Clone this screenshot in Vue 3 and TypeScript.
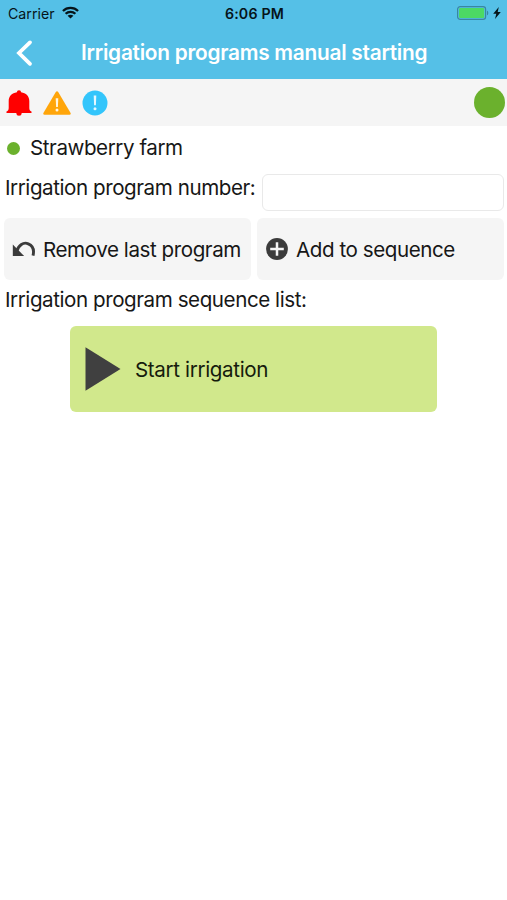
<script setup lang="ts">
import { ref } from 'vue'

const farmName = 'Strawberry farm'
const programNumber = ref('')
const sequence = ref<string[]>([])

function addToSequence(): void {
  const value = programNumber.value.trim()
  if (value) {
    sequence.value.push(value)
    programNumber.value = ''
  }
}

function removeLast(): void {
  sequence.value.pop()
}
</script>

<template>
  <div class="screen">
    <header class="header">
      <div class="status-bar">
        <div class="carrier">
          <span class="carrier-name">Carrier</span>
          <svg class="wifi" viewBox="0 0 18 13">
            <path d="M1 4.9C5.4 .6 12.6 .6 17 4.9M3.8 7.8C6.7 5.1 11.3 5.1 14.2 7.8" fill="none" stroke="#06141a" stroke-width="2.4" />
            <path d="M9 12.8 5.9 9.9C7.6 8.4 10.4 8.4 12.1 9.9Z" fill="#06141a" />
          </svg>
        </div>
        <span class="clock">6:06 PM</span>
        <div class="power">
          <svg class="battery" viewBox="0 0 32 14">
            <rect x="0.6" y="0.6" width="28" height="12.8" rx="2.6" fill="none" stroke="#3a86a0" stroke-width="1.2" />
            <rect x="2" y="2" width="25.2" height="10" rx="1.2" fill="#4cd964" />
            <path d="M30 4.7c1.7 .5 1.7 4.1 0 4.6Z" fill="#3a86a0" />
          </svg>
          <svg class="bolt" viewBox="0 0 8 12">
            <path d="M5.8 0 .2 6.7H3.3L2 12 7.8 5.1H4.7Z" fill="#06141a" />
          </svg>
        </div>
      </div>
      <div class="nav-bar">
        <svg class="back" viewBox="0 0 18 28">
          <path d="M15 3.4 4 14 15 24.8" fill="none" stroke="#fff" stroke-width="3.8" stroke-linecap="round" stroke-linejoin="miter" />
        </svg>
        <h1 class="title">Irrigation programs manual starting</h1>
      </div>
    </header>

    <div class="alerts">
      <div class="alert-icons">
        <svg class="bell" viewBox="0 0 26 26">
          <path d="M10.9 2.2a2.1 1.9 0 0 1 4.2 0c4.9 .7 8.2 3.9 8.2 8.7v7c0 1.8 .7 3 2.2 3.7v1.5H.5v-1.5c1.5-.7 2.2-1.9 2.2-3.7v-7c0-4.8 3.3-8 8.2-8.7Z" fill="#f00" />
          <path d="M10.4 23h5.2v.7a2.6 2 0 0 1-5.2 0Z" fill="#f00" />
        </svg>
        <svg class="warning" viewBox="0 0 28 24">
          <path d="M12.8 1.1Q14 -.7 15.2 1.1L27.6 22Q28.2 23.7 26.4 23.7H1.6Q-.2 23.7 .4 22Z" fill="#ffa50a" />
          <path d="M12.7 7.3h2.6l-.4 8.7h-1.8Z" fill="#fff5e0" />
          <circle cx="14" cy="19" r="1.5" fill="#fff5e0" />
        </svg>
        <svg class="info" viewBox="0 0 26 26">
          <circle cx="13" cy="13" r="12.5" fill="#33c5fb" />
          <path d="M11.7 5.5h2.6l-.4 9.8h-1.8Z" fill="#e5f8ff" />
          <circle cx="13" cy="18.7" r="1.5" fill="#e5f8ff" />
        </svg>
      </div>
      <span class="connection"></span>
    </div>

    <main class="content">
      <div class="farm">
        <span class="farm-dot"></span>
        <span class="farm-name">{{ farmName }}</span>
      </div>

      <div class="field">
        <label class="field-label" for="program">Irrigation program number:</label>
        <input id="program" v-model="programNumber" class="field-input" type="text" />
      </div>

      <div class="actions">
        <button class="action" type="button" @click="removeLast">
          <svg class="undo" viewBox="0 0 24 18">
            <path d="M4.6 11.5C6.5 5 11.5 1.7 16.3 3.8c4.2 1.8 6.1 6.2 4.7 11.8" fill="none" stroke="#3b3b3b" stroke-width="2.9" />
            <path d="M.8 4.4V15.9H12.1Z" fill="#3b3b3b" />
          </svg>
          <span class="remove-text">Remove last program</span>
        </button>
        <button class="action add" type="button" @click="addToSequence">
          <svg class="plus" viewBox="0 0 22 22">
            <circle cx="11" cy="11" r="10.9" fill="#3b3b3b" />
            <path d="M11 4.2V17.8M4.2 11H17.8" stroke="#f5f5f5" stroke-width="2.5" />
          </svg>
          <span class="add-text">Add to sequence</span>
        </button>
      </div>

      <div class="sequence">
        <span class="sequence-label">Irrigation program sequence list:</span>
        <span v-for="(item, index) in sequence" :key="index"> {{ item }}</span>
      </div>

      <button class="start" type="button">
        <svg class="play" viewBox="0 0 36 44">
          <path d="M.5 .3V43.7L35.5 22Z" fill="#404040" />
        </svg>
        <span class="start-text">Start irrigation</span>
      </button>
    </main>
  </div>
</template>

<style>
body {
  margin: 0;
  background: #fff;
}
</style>

<style scoped>
.screen {
  width: 100%;
  min-height: 900px;
  background: #fff;
  color: #171717;
  font-family: Inter, "Liberation Sans", sans-serif;
  font-size: 20.6px;
  line-height: 26px;
  letter-spacing: -0.44px;
  white-space: nowrap;
}
svg {
  display: block;
  flex: none;
}
.header {
  height: 79px;
  background: #55c0e7;
}
.status-bar {
  display: grid;
  grid-template-columns: 1fr auto 1fr;
  align-items: center;
  height: 27px;
  padding: 0 6px 0 8px;
  color: #06141a;
  letter-spacing: 0;
}
.carrier {
  display: flex;
  align-items: center;
  gap: 7px;
  font-size: 14.2px;
}
.wifi {
  width: 17px;
  height: 13px;
  margin-top: -2px;
}
.clock {
  font-size: 14.2px;
  font-weight: 600;
  letter-spacing: 0.2px;
}
.power {
  display: flex;
  justify-content: flex-end;
  align-items: center;
  gap: 4px;
  margin-top: -1px;
}
.battery {
  width: 32px;
  height: 14px;
}
.bolt {
  width: 8px;
  height: 12px;
}
.nav-bar {
  display: flex;
  align-items: center;
  height: 51px;
  padding-left: 15px;
}
.back {
  width: 18px;
  height: 28px;
}
.title {
  margin: 0 0 0 48px;
  color: #fff;
  font-size: 20.8px;
  font-weight: 600;
  letter-spacing: -0.25px;
}
.alerts {
  display: flex;
  justify-content: space-between;
  align-items: center;
  box-sizing: border-box;
  height: 47px;
  padding: 0 2px 0 6px;
  background: #f5f5f5;
}
.alert-icons {
  display: flex;
  align-items: center;
  gap: 11px;
}
.bell {
  width: 26px;
  height: 26px;
}
.warning {
  width: 28px;
  height: 24px;
}
.info {
  width: 26px;
  height: 26px;
}
.connection {
  width: 31px;
  height: 31px;
  border-radius: 50%;
  background: #6bb12d;
}
.content {
  display: flex;
  flex-direction: column;
}
.farm {
  display: flex;
  align-items: center;
  gap: 10px;
  height: 44px;
  padding-left: 7px;
}
.farm-dot {
  width: 13px;
  height: 13px;
  border-radius: 50%;
  background: #6bb12d;
}
.field {
  display: flex;
  justify-content: space-between;
  height: 48px;
  padding: 0 3px 0 5px;
}
.field-label {
  padding-top: 5px;
}
.field-input {
  box-sizing: border-box;
  width: 242px;
  height: 37px;
  margin-top: 4px;
  padding: 0 8px;
  border: 1px solid #e9e9e9;
  border-radius: 6px;
  background: #fff;
  font: inherit;
  outline: none;
}
.actions {
  display: grid;
  grid-template-columns: 247px 247px;
  gap: 6px;
  padding-left: 4px;
}
.action {
  display: flex;
  align-items: center;
  gap: 7px;
  height: 62px;
  padding: 0 0 0 8px;
  border: 0;
  border-radius: 6px;
  background: #f5f5f5;
  color: #171717;
  font: inherit;
  letter-spacing: inherit;
}
.action span,
.start span {
  padding-top: 2px;
}
.add {
  gap: 8px;
  padding-left: 9px;
}
.undo {
  width: 24px;
  height: 18px;
}
.plus {
  width: 22px;
  height: 22px;
}
.sequence {
  height: 46px;
  padding-left: 5px;
  line-height: 40px;
}
.start {
  display: flex;
  align-items: center;
  align-self: flex-start;
  gap: 14px;
  width: 367px;
  height: 86px;
  margin-left: 70px;
  padding: 0 0 0 15px;
  border: 0;
  border-radius: 6px;
  background: #d1e88c;
  color: #151b0c;
  font: inherit;
  letter-spacing: -0.35px;
}
.play {
  width: 36px;
  height: 44px;
}
</style>
